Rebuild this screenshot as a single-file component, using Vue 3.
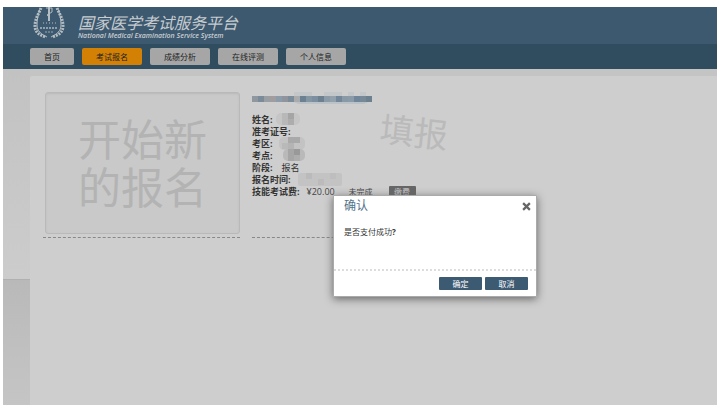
<template>
  <div class="page">
    <header class="banner">
      <svg class="logo" viewBox="0 0 32 33" aria-hidden="true">
        <g fill="none" stroke="#b4bdc3">
          <path d="M8 1C6 6 2 12 2 19C2 25 6 28 13 30" stroke-width="3" stroke-dasharray="2 1" />
          <path d="M24 1C26 6 30 12 30 19C30 25 26 28 19 30" stroke-width="3" stroke-dasharray="2 1" />
          <path d="M7 2C5 8 4 12 4 18C4 24 8 27 14 30M25 2C27 8 28 12 28 18C28 24 24 27 18 30" />
          <path d="M16 0V14" stroke-width="2" />
          <path d="M13 1H19V5L14 8L17 10" />
          <path d="M10 16H23" stroke-dasharray="1 2" />
          <path d="M7 21H25" stroke-width="2" stroke-dasharray="2 1" opacity="0.7" />
          <path d="M12 25H21" stroke-dasharray="2 1" opacity="0.8" />
        </g>
      </svg>
      <div class="brand">
        <h1>国家医学考试服务平台</h1>
        <p>National Medical Examination Service System</p>
      </div>
    </header>
    <nav class="menu">
      <button
        v-for="item in menu"
        :key="item"
        type="button"
        :class="{active: item === current}"
        @click="current = item"
      >{{ item }}</button>
    </nav>
    <main class="body">
      <aside class="side"><div class="side-top"></div></aside>
      <section class="content">
        <div class="start-wrap">
          <button type="button" class="start">开始新<br>的报名</button>
        </div>
        <div class="record">
          <div class="title-mask">
            <svg viewBox="0 0 120 16" aria-hidden="true">
              <path d="M42 0H60V6H42ZM72 0H90V6H72ZM96 0H102V6H96ZM108 0H114V6H108Z" fill="#c3c7ca" />
              <path d="M42 10H116L112 12H46Z" fill="#bcc3c8" />
              <rect v-for="(c, i) in titleMask" :key="i" :x="i * 6" y="4" width="6" height="6" :fill="c" />
            </svg>
          </div>
          <dl>
            <div v-for="row in rows" :key="row.label" class="row">
              <dt>{{ row.label }}:</dt>
              <dd>{{ row.value }}</dd>
            </div>
            <div class="row fee">
              <dt>技能考试费:</dt>
              <dd>
                <span class="price">¥20.00</span>
                <span class="status">未完成</span>
                <button type="button" class="pay" @click="open = true">缴费</button>
              </dd>
            </div>
          </dl>
          <svg class="masks" viewBox="0 0 75 76" aria-hidden="true">
            <rect
              v-for="(m, i) in masks"
              :key="i"
              :x="m[0]"
              :y="m[1]"
              :width="m[2]"
              :height="m[3]"
              :rx="m[5] || 0"
              :fill="m[4]"
            />
          </svg>
          <span class="stamp">填报</span>
        </div>
      </section>
    </main>
    <div v-if="open" class="dialog" role="dialog" aria-labelledby="dialog-title">
      <div class="dialog-head">
        <h2 id="dialog-title">确认</h2>
        <button type="button" class="close" aria-label="关闭" @click="open = false">
          <svg viewBox="0 0 8 8"><path d="M1 1L7 7M7 1L1 7" stroke="#666" stroke-width="2" /></svg>
        </button>
      </div>
      <p class="message">是否支付成功<b>?</b></p>
      <div class="actions">
        <button type="button" @click="open = false">确定</button>
        <button type="button" @click="open = false">取消</button>
      </div>
    </div>
  </div>
</template>

<script setup>
import {ref} from 'vue'

const menu = ['首页', '考试报名', '成绩分析', '在线评测', '个人信息']
const current = ref('考试报名')
const open = ref(true)

const rows = [
  {label: '姓名', value: ''},
  {label: '准考证号', value: ''},
  {label: '考区', value: ''},
  {label: '考点', value: ''},
  {label: '阶段', value: '报名'},
  {label: '报名时间', value: ''}
]

const titleMask = [
  '#8f989f', '#7b8b99', '#9a9fa3', '#a19d9f', '#8c9caa', '#8f949d', '#7b8c9b', '#aaabac', '#6b8090', '#8496a4',
  '#7b8fa0', '#6c8090', '#8b9ba7', '#93a1ac', '#74879a', '#8999a6', '#8b9ba7', '#71869a', '#778996', '#6c8090'
]

// x, y, width, height, colour and corner radius of each masked block
const masks = [
  [0, 0, 24, 12, '#c5c5c5', 5], [6, 0, 6, 12, '#b8b8b8'], [12, 0, 6, 6, '#a5a5a5'], [12, 6, 6, 6, '#adadad'],
  [3, 24, 26, 13, '#c3c3c3', 5], [12, 24, 6, 12, '#b4b4b4'], [12, 24, 12, 6, '#a9a9a9'], [6, 30, 6, 6, '#b9b9b9'],
  [7, 36, 22, 12, '#b9b9b9', 5], [12, 36, 6, 12, '#a6a6a6'], [18, 36, 6, 6, '#999'], [18, 42, 6, 6, '#adadad'],
  [22, 60, 44, 13, '#c3c3c3', 2], [30, 60, 6, 6, '#bababa'], [42, 66, 6, 6, '#bbb'], [54, 60, 6, 6, '#bebebe']
]
</script>

<style>
body {
  background: #fff;
}
</style>

<style scoped>
.page {
  box-sizing: border-box;
  position: relative;
  display: flex;
  flex-direction: column;
  min-height: 100vh;
  padding: 7px 4px 3px 3px;
  color: #333;
  font: 9px/12px "Open Sans", "Noto Sans CJK SC", sans-serif;
}
h1, h2, p, dl, dt, dd {
  margin: 0;
}
button {
  padding: 0;
  border: 0;
  font: inherit;
  cursor: pointer;
}
.banner {
  display: flex;
  height: 37px;
  padding-left: 30px;
  gap: 13px;
  background: #3d596f;
}
.logo {
  width: 32px;
  height: 33px;
}
.brand {
  padding-top: 8px;
  color: #c8cdd1;
}
.brand h1 {
  font: italic 400 16px/17px "Liberation Sans", "Noto Sans CJK SC", sans-serif;
}
.brand p {
  font: italic 600 7px/8px "Open Sans", sans-serif;
}
.menu {
  display: flex;
  gap: 8px;
  padding: 4px 27px;
  background: #304c5f;
}
.menu button {
  height: 17px;
  padding: 0 14px;
  border-radius: 2px;
  background: #a6a6a6;
  color: #222;
  font-size: 8px;
}
.menu button.active {
  background: #d38105;
}
.body {
  flex: 1;
  display: flex;
  background: #c4c4c4;
}
.side {
  flex: none;
  width: 27px;
  background: linear-gradient(#b9b9b9, #c5c5c5) 0 210px / 100% 126px no-repeat;
}
.side-top {
  height: 210px;
  border-bottom: 1px solid #b0b0b0;
  background: linear-gradient(#c2c2c2, #cccccc);
}
.content {
  flex: 1;
  display: flex;
  align-items: flex-start;
  gap: 12px;
  margin-top: 7px;
  padding: 16px 13px;
  border-top-left-radius: 2px;
  background: #cecece;
}
.start-wrap {
  width: 197px;
  padding-bottom: 3px;
  border-bottom: 1px dashed #888;
}
.start {
  display: block;
  width: 195px;
  height: 142px;
  margin-left: 2px;
  padding-top: 4px;
  border: 1px solid #b9b9b9;
  border-radius: 3px;
  box-shadow: inset 0 1px 2px #b9b9b9;
  background: #c9c9c9;
  color: #b3b3b3;
  font: 43px/48px "Liberation Sans", "Noto Sans CJK SC", sans-serif;
}
.record {
  position: relative;
  width: 197px;
  height: 145px;
  border-bottom: 1px dashed #888;
}
.title-mask {
  height: 22px;
}
.title-mask svg {
  display: block;
  width: 120px;
  height: 16px;
}
.row {
  display: flex;
  gap: 9px;
  height: 12px;
}
dt {
  font-weight: 700;
}
.fee {
  gap: 7px;
}
.fee dd {
  display: flex;
  color: #444;
}
.price {
  width: 42px;
}
.status {
  font-size: 8px;
}
.pay {
  width: 27px;
  height: 12px;
  margin-left: 16px;
  border-radius: 1px;
  background: #666;
  color: #ccc;
  font-size: 8px;
}
.masks {
  position: absolute;
  left: 24px;
  top: 21px;
  width: 75px;
  height: 76px;
}
.stamp {
  position: absolute;
  left: 128px;
  top: 20px;
  color: #bababa;
  font-size: 34px;
  line-height: 40px;
  white-space: nowrap;
  transform: rotate(6deg);
}
.dialog {
  position: absolute;
  left: 333px;
  top: 195px;
  width: 204px;
  border: 1px solid #aaa;
  box-sizing: border-box;
  border-radius: 1px;
  box-shadow: 0 2px 8px #666;
  background: #fff;
}
.dialog-head {
  display: flex;
  justify-content: space-between;
  align-items: center;
  height: 20px;
  padding: 0 5px 0 10px;
}
.dialog-head h2 {
  color: #53728a;
  font-size: 12px;
  line-height: 20px;
  font-weight: 400;
}
.close {
  width: 9px;
  height: 9px;
  background: none;
}
.close svg {
  display: block;
}
.message {
  height: 43px;
  padding: 10px 10px 0;
  border-bottom: 2px dotted #ddd;
  font-size: 8px;
}
.actions {
  display: flex;
  justify-content: flex-end;
  gap: 3px;
  padding: 6px 8px;
}
.actions button {
  width: 43px;
  height: 13px;
  border-radius: 1px;
  background: #3d5a73;
  color: #fff;
  font-size: 8px;
}
</style>
